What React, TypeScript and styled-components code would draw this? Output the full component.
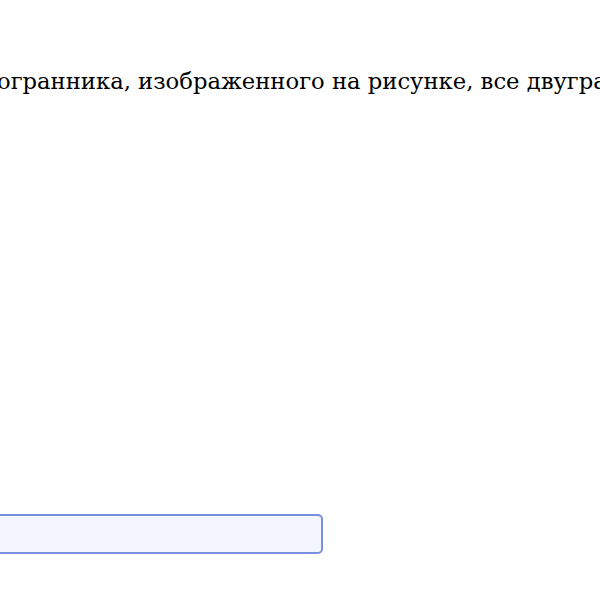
import React from "react";
import styled, { createGlobalStyle } from "styled-components";

const Global = createGlobalStyle`
  html, body { margin: 0; padding: 0; background: #fff; overflow: hidden; }
`;

const Page = styled.div`
  width: 600px;
  height: 600px;
  overflow: hidden;
  display: flex;
  flex-direction: column;
`;

const Question = styled.p`
  margin: 66px 0 0 -3px;
  font-family: "DejaVu Serif", serif;
  font-size: 22.7px;
  line-height: 30px;
  color: #000;
  white-space: nowrap;
`;

const Answer = styled.input`
  margin: 418px 0 0 -10px;
  width: 333px;
  height: 40px;
  box-sizing: border-box;
  background: #f3f6fd;
  border: 2px solid #7b8fe0;
  border-radius: 5px;
`;

export default function App() {
  return (
    <Page>
      <Global />
      <Question>огранника, изображенного на рисунке, все двугранные углы прямые.</Question>
      <Answer />
    </Page>
  );
}
